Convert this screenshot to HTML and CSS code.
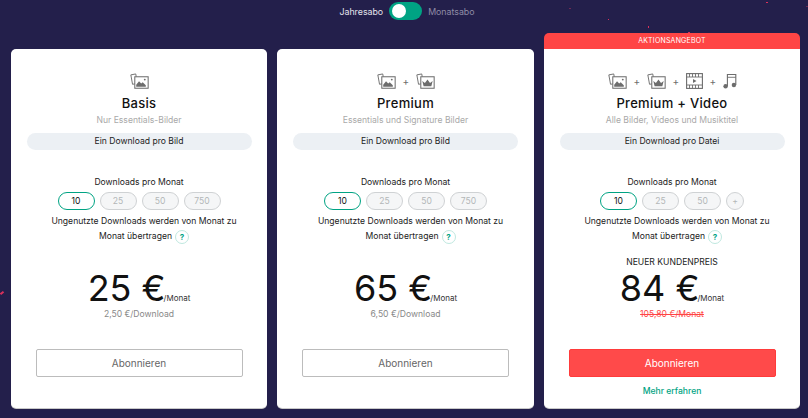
FILE: index.html
```html
<!DOCTYPE html>
<html lang="de">
<head>
<meta charset="UTF-8">
<meta name="viewport" content="width=device-width, initial-scale=1.0">
<title>Abo-Auswahl</title>
<link rel="stylesheet" href="styles.css">
</head>
<body>

<svg width="0" height="0" class="defs">
  <symbol id="stack" viewBox="0 0 20 17">
    <path d="M6.500 3.800 6 1 .8 2l1.800 10 2.400-.4" fill="none" stroke="currentColor"/>
    <rect x="5" y="4" width="14.200" height="12.200" fill="none" stroke="currentColor" stroke-width="1.100"/>
  </symbol>
  <symbol id="mountain" viewBox="0 0 20 17">
    <path d="M6.500 14.500v-2l3-3.800 2.300 2.400 1.600-1.200 3.300 3v1.600z" fill="currentColor"/>
    <circle cx="15.600" cy="7" r="1" fill="currentColor"/>
  </symbol>
  <symbol id="crown" viewBox="0 0 20 17">
    <path d="M8 14 6.600 8.500l2.800 2 2.700-3.700 2.700 3.700 2.800-2L16.200 14z" fill="currentColor"/>
  </symbol>
  <symbol id="film" viewBox="0 0 17 16">
    <rect x=".6" y=".6" width="15.800" height="14.800" fill="none" stroke="currentColor" stroke-width="1.100"/>
    <path d="M.6 4h15.800M.6 12h15.800M3.500.6V4M6.500.6V4M9.500.6V4M12.500.6V4M3.500 12v3.400M6.500 12v3.400M9.500 12v3.400M12.500 12v3.400" fill="none" stroke="currentColor" stroke-width=".9"/>
    <path d="M7 6v4l3.500-2z" fill="currentColor"/>
  </symbol>
  <symbol id="music" viewBox="0 0 14 16">
    <path d="M4.400 13V1.500h8.400V12" fill="none" stroke="currentColor" stroke-width="1.100"/>
    <path d="M4.400 4.300h8.400" fill="none" stroke="currentColor" stroke-width=".9"/>
    <circle cx="2.600" cy="13.300" r="2.200" fill="currentColor"/>
    <circle cx="10.900" cy="12" r="2.200" fill="currentColor"/>
  </symbol>
</svg>

<span class="dot dot-a"></span>
<span class="dot dot-b"></span>
<span class="dot dot-c"></span>
<span class="dot dot-d"></span>
<span class="dot dot-e"></span>
<span class="dot dot-f"></span>
<span class="dot dot-g"></span>

<div class="switch-row">
  <span class="switch-on">Jahresabo</span>
  <span class="switch"><span class="knob"></span></span>
  <span class="switch-off">Monatsabo</span>
</div>

<div class="plans">

  <div class="card">
    <div class="icons">
      <svg class="ico"><use href="#stack"/><use href="#mountain"/></svg>
    </div>
    <h2>Basis</h2>
    <p class="sub">Nur Essentials-Bilder</p>
    <p class="pill">Ein Download pro Bild</p>
    <p class="dl-label">Downloads pro Monat</p>
    <div class="chips">
      <span class="chip active">10</span>
      <span class="chip">25</span>
      <span class="chip">50</span>
      <span class="chip">750</span>
    </div>
    <div class="rollover">
      <p>Ungenutzte Downloads werden von Monat zu</p>
      <div class="rollover-end"><p>Monat übertragen</p><span class="help">?</span></div>
    </div>
    <div class="price-box">
      <div class="price">25 €<small>/Monat</small></div>
      <p class="per">2,50 €/Download</p>
    </div>
    <button class="btn">Abonnieren</button>
  </div>

  <div class="card">
    <div class="icons">
      <svg class="ico"><use href="#stack"/><use href="#mountain"/></svg>
      <span class="plus">+</span>
      <svg class="ico"><use href="#stack"/><use href="#crown"/></svg>
    </div>
    <h2>Premium</h2>
    <p class="sub">Essentials und Signature Bilder</p>
    <p class="pill">Ein Download pro Bild</p>
    <p class="dl-label">Downloads pro Monat</p>
    <div class="chips">
      <span class="chip active">10</span>
      <span class="chip">25</span>
      <span class="chip">50</span>
      <span class="chip">750</span>
    </div>
    <div class="rollover">
      <p>Ungenutzte Downloads werden von Monat zu</p>
      <div class="rollover-end"><p>Monat übertragen</p><span class="help">?</span></div>
    </div>
    <div class="price-box">
      <div class="price">65 €<small>/Monat</small></div>
      <p class="per">6,50 €/Download</p>
    </div>
    <button class="btn">Abonnieren</button>
  </div>

  <div class="card offer">
    <div class="banner">AKTIONSANGEBOT</div>
    <div class="icons">
      <svg class="ico"><use href="#stack"/><use href="#mountain"/></svg>
      <span class="plus">+</span>
      <svg class="ico"><use href="#stack"/><use href="#crown"/></svg>
      <span class="plus">+</span>
      <svg class="ico-film"><use href="#film"/></svg>
      <span class="plus">+</span>
      <svg class="ico-music"><use href="#music"/></svg>
    </div>
    <h2>Premium + Video</h2>
    <p class="sub">Alle Bilder, Videos und Musiktitel</p>
    <p class="pill">Ein Download pro Datei</p>
    <p class="dl-label">Downloads pro Monat</p>
    <div class="chips">
      <span class="chip active">10</span>
      <span class="chip">25</span>
      <span class="chip">50</span>
      <span class="chip round">+</span>
    </div>
    <div class="rollover">
      <p>Ungenutzte Downloads werden von Monat zu</p>
      <div class="rollover-end"><p>Monat übertragen</p><span class="help">?</span></div>
    </div>
    <div class="price-box">
      <p class="new-price">NEUER KUNDENPREIS</p>
      <div class="price">84 €<small>/Monat</small></div>
      <p class="per old">105,80 €/Monat</p>
    </div>
    <button class="btn primary">Abonnieren</button>
    <a class="more" href="#">Mehr erfahren</a>
  </div>

</div>

</body>
</html>
```

FILE: styles.css
```css
* {
  box-sizing: border-box;
}

body {
  position: relative;
  width: 808px;
  height: 418px;
  margin: 0;
  overflow: hidden;
  background-color: #231f4b;
  font-family: Inter, "Liberation Sans", sans-serif;
  font-size: 8.6px;
  color: #222;
}

p, h2 {
  margin: 0;
}

.defs {
  position: absolute;
}

/* Confetti specks on the background */
.dot {
  position: absolute;
  width: 2px;
  height: 1px;
  background-color: #d8315b;
}
.dot-a { left: 0; top: 292px; width: 4px; height: 2px; transform: rotate(-40deg); }
.dot-b { left: 648px; top: 26px; height: 2px; width: 1px; }
.dot-c { left: 688px; top: 32px; }
.dot-d { left: 569px; top: 8px; background-color: #6d2a55; }
.dot-e { left: 608px; top: 19px; width: 1px; }
.dot-f { left: 766px; top: 2px; }
.dot-g { left: 806px; top: 6px; background-color: #6d2a55; }

/* Jahresabo / Monatsabo switch */
.switch-row {
  display: flex;
  justify-content: center;
  align-items: center;
  gap: 6px;
  height: 22px;
  padding-left: 6px;
  font-size: 8.8px;
}

.switch-on {
  color: #e4e3ec;
}

.switch-off {
  color: #8f8ca6;
}

.switch {
  display: flex;
  align-items: center;
  width: 33px;
  height: 18px;
  padding-left: 3px;
  border-radius: 9px;
  background-color: #00a383;
}

.knob {
  width: 14px;
  height: 14px;
  border-radius: 50%;
  background-color: #fff;
}

/* Plan cards */
.plans {
  display: grid;
  grid-template-columns: 256px 257px 256px;
  gap: 10px;
  height: 359px;
  margin: 27px 0 0 11px;
}

.card {
  position: relative;
  display: flex;
  flex-direction: column;
  align-items: center;
  padding: 24px 15px 0;
  border-radius: 5px;
  background-color: #fff;
  box-shadow: 0 1px 0 #c9c9c9;
}

.offer {
  border-radius: 0 0 5px 5px;
}

.banner {
  position: absolute;
  left: 0;
  right: 0;
  top: -16px;
  height: 16px;
  border-radius: 5px 5px 0 0;
  background-color: #ff4545;
  color: #fff;
  font-size: 7px;
  line-height: 16px;
  text-align: center;
  letter-spacing: .2px;
}

.icons {
  display: flex;
  align-items: center;
  gap: 7px;
  height: 16px;
  color: #6d6d6d;
  font-size: 10px;
}

.ico {
  width: 19px;
  height: 16px;
}

.ico-film {
  width: 17px;
  height: 16px;
}

.ico-music {
  width: 14px;
  height: 16px;
}

.plus {
  width: 6px;
  text-align: center;
}

h2 {
  margin-top: 6px;
  font-size: 13px;
  line-height: 16px;
  font-weight: 500;
  letter-spacing: .3px;
  color: #111;
}

.sub {
  margin-top: 3px;
  line-height: 12px;
  color: #a9a9a9;
}

.pill {
  width: 225px;
  height: 17px;
  margin-top: 7px;
  border-radius: 9px;
  background-color: #ecf0f4;
  line-height: 17px;
  text-align: center;
  color: #222;
}

.dl-label {
  margin-top: 26px;
  line-height: 12px;
}

.chips {
  display: flex;
  gap: 5px;
  margin-top: 4px;
}

.chip {
  width: 37px;
  height: 18px;
  border: 1px solid #cfd2d4;
  border-radius: 9px;
  background-color: #f5f6f7;
  color: #b3b6b8;
  line-height: 16px;
  text-align: center;
}

.chip.active {
  border-color: #00a383;
  background-color: #fff;
  color: #111;
}

.chip.round {
  width: 18px;
}

.rollover {
  width: 200px;
  margin: 4px 0 0 10px;
  line-height: 15px;
  text-align: center;
}

.rollover-end {
  display: flex;
  justify-content: center;
  align-items: center;
  gap: 3px;
}

.help {
  width: 14px;
  height: 14px;
  border: 1px solid #bfe8df;
  border-radius: 50%;
  color: #00a383;
  font-size: 8px;
  font-weight: 700;
  line-height: 12px;
  text-align: center;
}

.price-box {
  display: flex;
  flex-direction: column;
  justify-content: flex-end;
  align-items: center;
  height: 76px;
}

.new-price {
  line-height: 12px;
}

.price {
  font-size: 36px;
  line-height: 41px;
  color: #111;
}

.price small {
  margin-left: -2px;
  font-size: 8px;
  line-height: 1;
  color: #333;
}

.per {
  margin-top: -1px;
  line-height: 12px;
  color: #888;
}

.per.old {
  color: #ff4545;
  text-decoration: line-through;
}

.btn {
  width: 207px;
  height: 28px;
  margin-top: 29px;
  padding: 0;
  border: 1px solid #bcbcbc;
  border-radius: 2px;
  background-color: #fff;
  color: #666;
  font-family: inherit;
  font-size: 10px;
  cursor: pointer;
}

.btn.primary {
  border-color: #ff3b3b;
  background-color: #ff4a4a;
  color: #fff;
}

.more {
  margin-top: 8px;
  color: #00a383;
  font-weight: 500;
  line-height: 12px;
  text-decoration: none;
}
```
